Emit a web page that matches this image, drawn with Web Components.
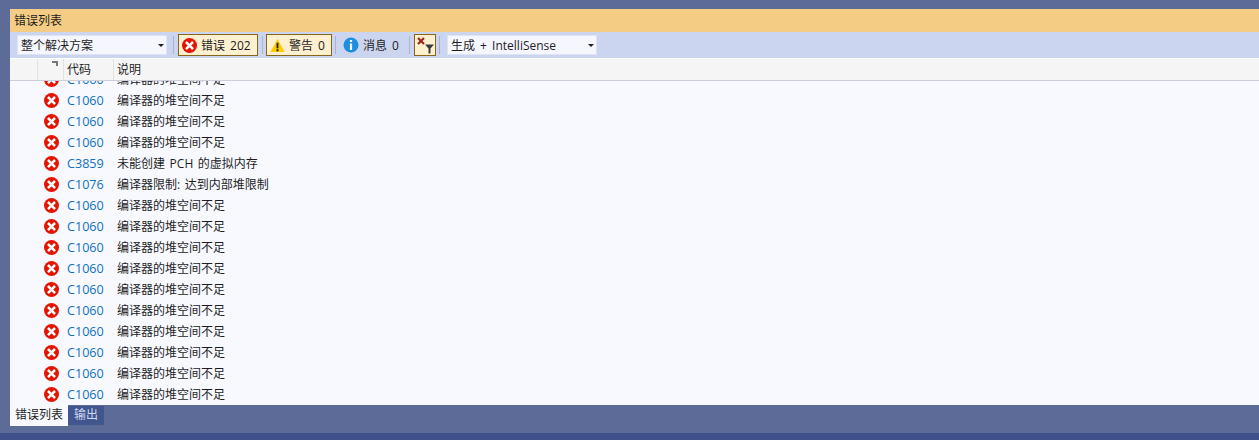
<!DOCTYPE html>
<html><head><meta charset="utf-8"><style>
html,body{margin:0;padding:0;height:100%;overflow:hidden}
body{font-family:"Open Sans","Noto Sans CJK SC",sans-serif;font-size:12px;color:#1e1e1e;background:#5d6b99}
</style></head><body>
<err-window></err-window>
<script>
const F='"Open Sans","Noto Sans CJK SC",sans-serif';
const errIcon=(s=16)=>`<svg width="${s}" height="${s}" viewBox="0 0 16 16" style="display:block;flex:none"><circle cx="8" cy="8" r="8" fill="#e51400"/><path d="M5.2 5.2l5.6 5.6M10.8 5.2l-5.6 5.6" stroke="#fff" stroke-width="2.7" stroke-linecap="square" fill="none"/></svg>`;
class ErrRow extends HTMLElement{
  constructor(){super();this.attachShadow({mode:'open'}).innerHTML=`<style>
  :host{display:flex;height:21px;align-items:center;white-space:nowrap;line-height:21px;word-spacing:1.5px}
  .i{width:16px;margin-left:33px;display:flex;justify-content:center}
  .c{width:50px;margin-left:8px;color:#0e70c0;font-size:12.6px}
  .d{font-size:12px}
  </style><span class="i">${errIcon(15)}</span><span class="c"><slot name="code"></slot></span><span class="d"><slot></slot></span>`}
}
customElements.define('err-row',ErrRow);
class ToolBtn extends HTMLElement{
  constructor(){super();this.attachShadow({mode:'open'}).innerHTML=`<style>
  :host{display:flex;align-items:center;box-sizing:border-box;height:22px;padding:0 0 0 3px;gap:4px;border:1px solid transparent;font-size:12px;word-spacing:2px;white-space:nowrap;color:#1e1e1e}
  :host([on]){background:#fff0d0;border-color:#8a6518}
  </style><slot name="icon"></slot><slot></slot>`}
}
customElements.define('tool-btn',ToolBtn);
class DropBox extends HTMLElement{
  constructor(){super();this.attachShadow({mode:'open'}).innerHTML=`<style>
  :host{display:flex;align-items:center;justify-content:space-between;box-sizing:border-box;height:20px;background:#f5f6fe;border:1px solid #dde4f8;padding:0 2.5px 0 3px;font-size:12px;word-spacing:2px;white-space:nowrap}
  i{border:3.5px solid transparent;border-top:3.5px solid #1e1e1e;border-bottom:0;width:0;height:0;display:block}
  </style><span><slot></slot></span><i></i>`}
}
customElements.define('drop-box',DropBox);
class ErrWindow extends HTMLElement{
  constructor(){super();
  const rows=[['C1060','编译器的堆空间不足'],['C1060','编译器的堆空间不足'],['C1060','编译器的堆空间不足'],['C1060','编译器的堆空间不足'],['C3859','未能创建 PCH 的虚拟内存'],['C1076','编译器限制: 达到内部堆限制']];
  for(let i=0;i<10;i++)rows.push(['C1060','编译器的堆空间不足']);
  this.attachShadow({mode:'open'}).innerHTML=`<style>
  :host{display:flex;flex-direction:column;height:440px;width:1259px;background:#5d6b99;font-family:${F}}
  .title{margin:9px 0 0 10px;height:23px;background:#f5cc84;padding-left:4px;line-height:23px;font-size:12px;color:#1e1e1e}
  .bar{margin-left:10px;height:26px;background:#ccd5f0;display:flex;align-items:center;box-sizing:border-box;padding-left:7px}
  .sep{width:1px;height:18px;background:#a9b4d4;flex:none}
  .white{margin-left:10px;height:1px;background:#fff}
  .head{margin-left:10px;height:21px;background:#f5f5f5;border-bottom:1px solid #ccceDb;display:flex;font-size:12px;line-height:21px}
  .head span{box-sizing:border-box;border-right:1px solid #e2e2e2;height:21px;position:relative}
  .list{margin-left:10px;height:324px;background:#f8f9ff;overflow:hidden}
  .in{margin-top:-12px}
  .tabs{margin-left:10px;height:23px;display:flex;align-items:flex-start;font-size:12px}
  .t1{width:58px;background:#f8f9ff;text-align:center;height:21px;line-height:20px}
  .t2{width:36px;background:#40568d;color:#d0d9f2;text-align:center;height:19px;line-height:18px;margin-top:1px}
  .gap{height:5px}
  .foot{flex:1;background:#40508a}
  svg{display:block}
  </style>
  <div class="title">错误列表</div>
  <div class="bar">
    <drop-box style="width:150px">整个解决方案</drop-box><span class="sep" style="margin:0 4px 0 6px"></span>
    <tool-btn on style="width:80px"><span slot="icon">${errIcon(15)}</span>错误 202</tool-btn><span class="sep" style="margin:0 3px 0 4px"></span>
    <tool-btn on style="width:66px"><span slot="icon"><svg width="15" height="15" viewBox="0 0 16 15"><path d="M8 .5L15.6 14.5H.4z" fill="#fc0"/><path d="M7 4.5h2v6H7zM7 11.5h2v2H7z" fill="#1e1e1e"/></svg></span>警告 0</tool-btn><span class="sep" style="margin:0 2px 0 3px"></span>
    <tool-btn style="width:71px;padding-left:4px"><span slot="icon"><svg width="16" height="16" viewBox="0 0 16 16"><circle cx="8" cy="8" r="7.5" fill="#1c8fe0"/><path d="M6.9 3h2.2v2.1H6.9zM6.9 6.5h2.2V13H6.9z" fill="#fff"/></svg></span>消息 0</tool-btn><span class="sep" style="margin:0 4px 0 0"></span>
    <tool-btn on style="width:22px;padding:0"><span slot="icon"><svg width="20" height="20" viewBox="0 0 20 20"><path d="M3 3l6 6M9 3l-6 6" stroke="#a1261a" stroke-width="2.2" fill="none"/><path d="M10 9.5h9l-3.5 4v5h-2v-5z" fill="#3a3a3a"/></svg></span></tool-btn><span class="sep" style="margin:0 7px 0 3px"></span>
    <drop-box style="width:150px">生成 + IntelliSense</drop-box>
  </div>
  <div class="white"></div>
  <div class="head">
    <span style="width:28px"></span>
    <span style="width:26px"><svg style="position:absolute;right:5px;top:2px" width="6" height="6" viewBox="0 0 6 6"><path d="M0 0h6v5H4V2H0z" fill="#777"/></svg></span>
    <span style="width:50px;padding-left:3px">代码</span>
    <span style="border:0;padding-left:3px">说明</span>
  </div>
  <div class="list"><div class="in">${rows.map(r=>`<err-row><span slot="code">${r[0]}</span>${r[1]}</err-row>`).join('')}</div></div>
  <div class="tabs"><div class="t1">错误列表</div><div class="t2">输出</div></div>
  <div class="gap"></div>
  <div class="foot"></div>`}
}
customElements.define('err-window',ErrWindow);
</script></body></html>
